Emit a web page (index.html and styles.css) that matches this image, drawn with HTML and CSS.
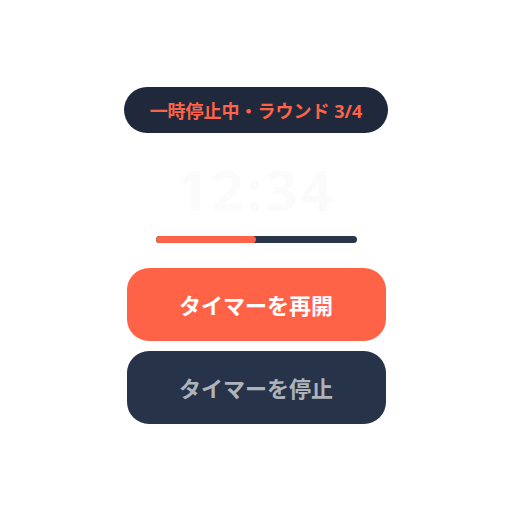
FILE: index.html
```html
<!DOCTYPE html>
<html lang="ja">
<head>
<meta charset="utf-8">
<link rel="stylesheet" href="styles.css">
</head>
<body>
<main class="timer">
  <div class="badge">一時停止中・ラウンド 3/4</div>
  <div class="time">12:34</div>
  <div class="progress"><div class="progress-fill" style="width:50%"></div></div>
  <div class="actions">
    <button class="btn btn-primary">タイマーを再開</button>
    <button class="btn btn-secondary">タイマーを停止</button>
  </div>
</main>
</body>
</html>
```
FILE: styles.css
```css
html, body {
  margin: 0;
  padding: 0;
  background: #ffffff;
  width: 512px;
  height: 512px;
}
body {
  font-family: "Noto Sans", "Noto Sans CJK JP", sans-serif;
  display: flex;
  align-items: center;
  justify-content: center;
}
.timer {
  display: flex;
  flex-direction: column;
  align-items: center;
  margin-top: -2px;
}
.badge {
  box-sizing: border-box;
  width: 264px;
  height: 46px;
  border-radius: 23px;
  background: #1f293b;
  color: #ff6347;
  font-weight: 700;
  font-size: 18px;
  display: flex;
  align-items: center;
  justify-content: center;
}
.time {
  margin-top: 26px;
  font-size: 56px;
  font-weight: 700;
  line-height: 60px;
  color: #fbfbfb;
  letter-spacing: 3px;
}
.progress {
  margin-top: 17px;
  width: 201px;
  height: 7px;
  border-radius: 4px;
  background: #293548;
  overflow: hidden;
}
.progress-fill {
  height: 100%;
  background: #ff6347;
  border-radius: 4px;
}
.actions {
  margin-top: 25px;
  display: flex;
  flex-direction: column;
  gap: 10px;
}
.btn {
  width: 259px;
  height: 73px;
  border: none;
  border-radius: 22px;
  font-family: "Noto Sans", "Noto Sans CJK JP", sans-serif;
  font-weight: 700;
  font-size: 22px;
}
.btn-primary {
  background: #ff6347;
  color: #ffffff;
}
.btn-secondary {
  background: #263349;
  color: #aeb3bb;
}
```
